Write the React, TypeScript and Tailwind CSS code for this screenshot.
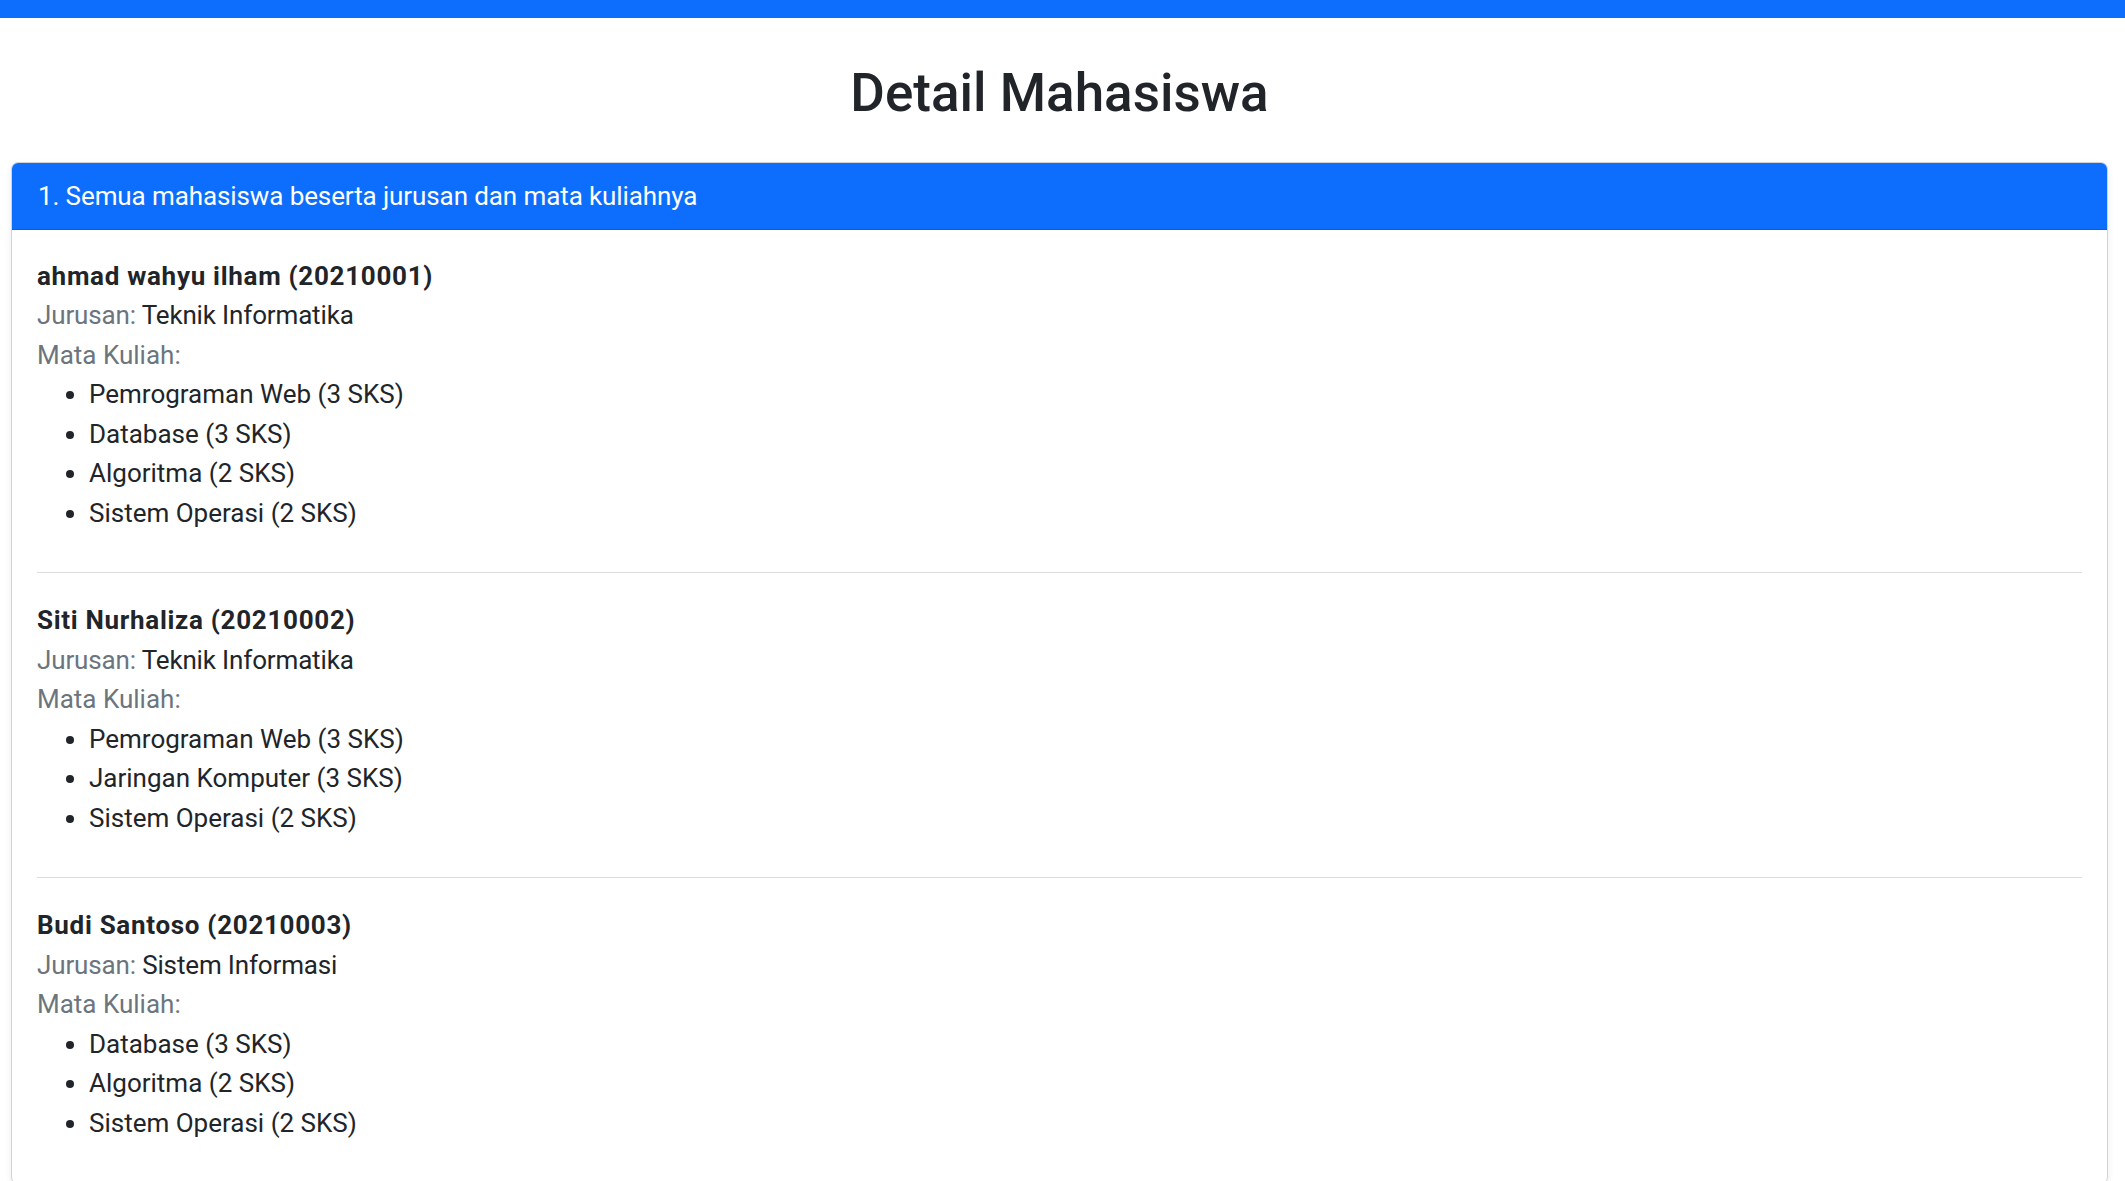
const students = [
  {
    name: "ahmad wahyu ilham",
    nim: "20210001",
    jurusan: "Teknik Informatika",
    matkul: [
      { nama: "Pemrograman Web", sks: 3 },
      { nama: "Database", sks: 3 },
      { nama: "Algoritma", sks: 2 },
      { nama: "Sistem Operasi", sks: 2 },
    ],
  },
  {
    name: "Siti Nurhaliza",
    nim: "20210002",
    jurusan: "Teknik Informatika",
    matkul: [
      { nama: "Pemrograman Web", sks: 3 },
      { nama: "Jaringan Komputer", sks: 3 },
      { nama: "Sistem Operasi", sks: 2 },
    ],
  },
  {
    name: "Budi Santoso",
    nim: "20210003",
    jurusan: "Sistem Informasi",
    matkul: [
      { nama: "Database", sks: 3 },
      { nama: "Algoritma", sks: 2 },
      { nama: "Sistem Operasi", sks: 2 },
    ],
  },
];

export default function App() {
  return (
    <div className="h-screen overflow-hidden bg-white text-[#212529] font-[Roboto,'Liberation_Sans',sans-serif]">
      <div className="h-[18px] bg-[#0d6efd]" />

      <div className="ml-[11px] mr-[17px] pt-[43px]">
        <h2 className="text-center text-[53px] leading-[64px] font-medium mb-[37px]">
          Detail Mahasiswa
        </h2>

        <div className="rounded-[7px] border border-[#d3d3d4] shadow-[0_3px_7px_rgba(0,0,0,0.075)] bg-white">
          <div className="rounded-t-[6px] bg-[#0d6efd] text-white px-[26px] pt-[14px] pb-[12px] text-[26px] leading-[39.5px] tracking-[-0.1px] border-b border-[#0b5ed7]">
            1. Semua mahasiswa beserta jurusan dan mata kuliahnya
          </div>

          <div className="px-[25px] pt-[27px] pb-[40px] text-[26px] leading-[39.5px]">
            {students.map((s, i) => (
              <div key={s.nim}>
                {i > 0 && (
                  <hr className="border-0 border-t border-[#dcdddf] mt-[39px] mb-[28px]" />
                )}
                <div className="font-bold tracking-[0.7px]">
                  {s.name} ({s.nim})
                </div>
                <div className="tracking-[-0.15px]">
                  <span className="text-[#6c757d]">Jurusan:</span> {s.jurusan}
                </div>
                <div className="text-[#6c757d]">Mata Kuliah:</div>
                <ul className="list-disc pl-[52px]">
                  {s.matkul.map((m) => (
                    <li key={m.nama}>
                      {m.nama} ({m.sks} SKS)
                    </li>
                  ))}
                </ul>
              </div>
            ))}
          </div>
        </div>
      </div>
    </div>
  );
}
